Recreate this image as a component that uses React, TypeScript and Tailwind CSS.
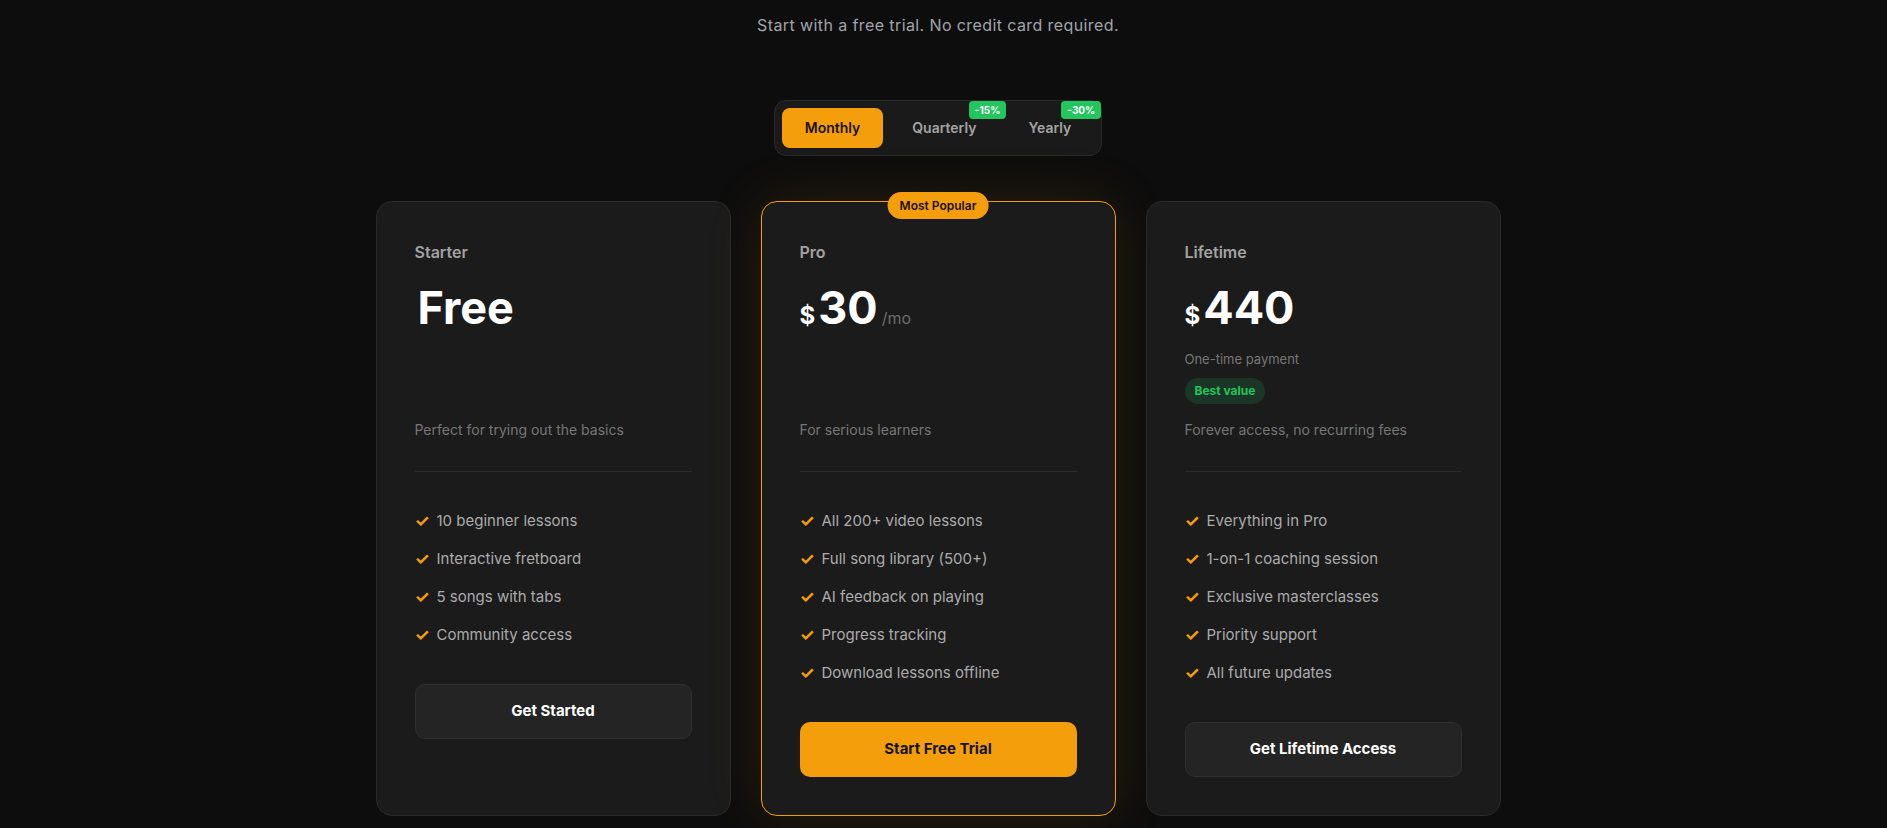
import React from 'react';

interface Plan {
  name: string;
  price: string;
  suffix?: string;
  note?: string;
  badge?: string;
  description: string;
  features: string[];
  cta: string;
  featured?: boolean;
}

const plans: Plan[] = [
  {
    name: 'Starter',
    price: 'Free',
    description: 'Perfect for trying out the basics',
    features: ['10 beginner lessons', 'Interactive fretboard', '5 songs with tabs', 'Community access'],
    cta: 'Get Started',
  },
  {
    name: 'Pro',
    price: '30',
    suffix: '/mo',
    description: 'For serious learners',
    features: [
      'All 200+ video lessons',
      'Full song library (500+)',
      'AI feedback on playing',
      'Progress tracking',
      'Download lessons offline',
    ],
    cta: 'Start Free Trial',
    featured: true,
  },
  {
    name: 'Lifetime',
    price: '440',
    note: 'One-time payment',
    badge: 'Best value',
    description: 'Forever access, no recurring fees',
    features: [
      'Everything in Pro',
      '1-on-1 coaching session',
      'Exclusive masterclasses',
      'Priority support',
      'All future updates',
    ],
    cta: 'Get Lifetime Access',
  },
];

const periods = [
  { label: 'Monthly', active: true },
  { label: 'Quarterly', discount: '-15%' },
  { label: 'Yearly', discount: '-30%' },
];

const PlanCard: React.FC<{ plan: Plan }> = ({ plan }) => (
  <div
    className={
      'relative flex flex-col rounded-2xl border bg-[#1b1b1b] p-[38px] ' +
      (plan.featured
        ? 'border-[#f59e0b] shadow-[0_0_60px_rgba(245,158,11,0.12)]'
        : 'border-[#2a2a2a]')
    }
  >
    {plan.featured && (
      <span className="absolute -top-[10px] left-1/2 -translate-x-1/2 flex h-[27px] items-center rounded-full bg-[#f59e0b] px-3 text-xs font-semibold text-[#1a1206]">
        Most Popular
      </span>
    )}

    <h3 className="text-base leading-6 font-semibold text-[#a3a3a3]">{plan.name}</h3>

    <div className="mt-5 h-[120px]">
      {plan.price === 'Free' ? (
        <div className="pl-[3px] text-[45px] leading-[48px] font-bold text-white">Free</div>
      ) : (
        <div className="flex items-baseline">
          <span className="mr-[3px] text-2xl leading-none font-bold text-white">$</span>
          <span className="text-[45px] leading-[48px] font-bold text-white">{plan.price}</span>
          {plan.suffix && <span className="ml-1 text-base text-[#6b6b6b]">{plan.suffix}</span>}
        </div>
      )}
      {plan.note && <p className="mt-[17px] text-[13px] leading-5 text-[#767676]">{plan.note}</p>}
      {plan.badge && (
        <span className="mt-[9px] inline-flex h-[26px] items-center rounded-full bg-[#1b3626] px-2.5 text-xs font-bold text-[#22c55e]">
          {plan.badge}
        </span>
      )}
    </div>

    <p className="mt-4 text-sm leading-5 text-[#767676]">{plan.description}</p>

    <div className="mt-[31px] h-px bg-[#2c2c2c]" />

    <ul className="mt-[37px] flex flex-col gap-[14px]">
      {plan.features.map((f) => (
        <li key={f} className="flex items-center gap-3 text-[15px] leading-6 text-[#ababab]">
          <span className="w-[10px] text-[17px] leading-6 font-bold text-[#f59e0b]">✓</span>
          {f}
        </li>
      ))}
    </ul>

    <button
      className={
        'mt-[37px] h-[55px] w-full rounded-[10px] text-[15px] font-bold ' +
        (plan.featured
          ? 'bg-[#f59e0b] text-[#141414]'
          : 'border border-[#2f2f2f] bg-[#242424] text-white')
      }
    >
      {plan.cta}
    </button>
  </div>
);

export default function App() {
  return (
    <div
      className="min-h-screen bg-[#0d0d0d] pt-[13px] pr-[11px] pb-10"
      style={{ fontFamily: 'Inter, "Noto Sans", sans-serif' }}
    >
      <p className="text-center text-base leading-6 tracking-[0.4px] text-[#a1a4aa]">
        Start with a free trial. No credit card required.
      </p>

      <div className="mt-[63px] flex justify-center">
        <div className="flex items-center gap-1.5 rounded-xl border border-[#2a2a2a] bg-[#1a1a1a] p-[7px]">
          {periods.map((p) => (
            <button
              key={p.label}
              className={
                'relative h-10 rounded-lg px-[23px] text-sm font-semibold ' +
                (p.active ? 'bg-[#f59e0b] text-[#1a1206]' : 'text-[#a3a3a3]')
              }
            >
              {p.label}
              {p.discount && (
                <span className="absolute -top-[7px] -right-[7px] flex h-[18px] items-center rounded-[4px] bg-[#22c55e] px-1.5 text-[10px] font-bold text-white">
                  {p.discount}
                </span>
              )}
            </button>
          ))}
        </div>
      </div>

      <div className="mx-auto mt-[45px] grid w-[1125px] grid-cols-3 gap-[30px]">
        {plans.map((plan) => (
          <PlanCard key={plan.name} plan={plan} />
        ))}
      </div>
    </div>
  );
}
